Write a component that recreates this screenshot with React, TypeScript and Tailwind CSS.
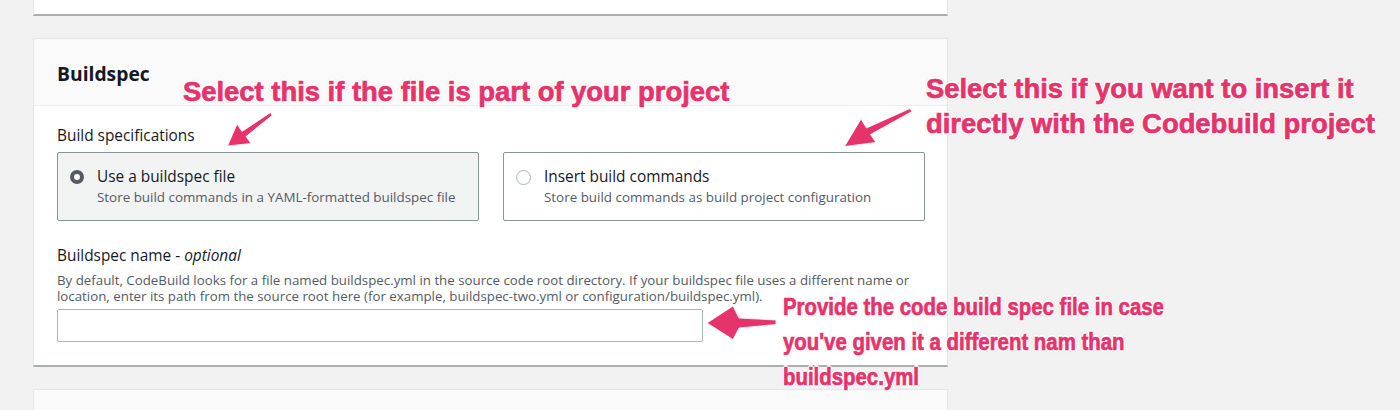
import React from "react";

const pinkText =
  "font-['Liberation_Sans',Arial,sans-serif] font-bold text-[#e6336b] [-webkit-text-stroke:0.7px_#e6336b] [text-shadow:1px_1px_0_#fff,-1px_-1px_0_#fff,1px_-1px_0_#fff,-1px_1px_0_#fff,2px_0_0_#fff,-2px_0_0_#fff,0_2px_0_#fff,0_-2px_0_#fff,0_0_3px_#8f8f8f]";

export default function App() {
  return (
    <div className="relative w-[1400px] h-[410px] overflow-hidden bg-[#f2f2f2] font-['Open_Sans',sans-serif] text-[#16191f]">
      <div className="ml-[33px] w-[915px] flex flex-col">
        {/* top card remnant */}
        <div className="h-[16px] bg-white border-x border-[#e4e7e8] border-b-2 border-b-[#a9aeb0]" />

        {/* Buildspec card */}
        <div className="mt-[22px] bg-white border-x border-t border-[#e4e7e8] border-b-2 border-b-[#a9aeb0] flex flex-col">
          <div className="h-[67px] bg-[#fafafa] border-b border-[#eaeded] pl-[23px] pt-[22px]">
            <h2 className="text-[19.3px] leading-[25px] font-bold">Buildspec</h2>
          </div>
          <div className="pl-[23px] pr-[22px] pt-[19px] pb-[23px] flex flex-col">
            <div className="text-[15.4px] leading-[22px]">Build specifications</div>
            <div className="mt-[5px] grid grid-cols-2 gap-[24px]">
              <div className="h-[69px] border border-[#879596] bg-[#f2f3f3] rounded-[2px] flex items-start pl-[12px] pt-[13px] gap-[13px]">
                <div className="mt-[4px] w-[14px] h-[14px] rounded-full border-[4px] border-[#545b64] bg-white shrink-0" />
                <div className="flex flex-col">
                  <span className="text-[15.4px] leading-[21px]">Use a buildspec file</span>
                  <span className="text-[13.4px] leading-[20px] text-[#545b64]">
                    Store build commands in a YAML-formatted buildspec file
                  </span>
                </div>
              </div>
              <div className="h-[69px] border border-[#879596] bg-white rounded-[2px] flex items-start pl-[12px] pt-[13px] gap-[13px]">
                <div className="mt-[4px] w-[15px] h-[15px] rounded-full border border-[#aab7b8] bg-white shrink-0" />
                <div className="flex flex-col">
                  <span className="text-[15.4px] leading-[21px]">Insert build commands</span>
                  <span className="text-[13.4px] leading-[20px] text-[#545b64]">
                    Store build commands as build project configuration
                  </span>
                </div>
              </div>
            </div>
            <div className="mt-[24px] text-[15.4px] leading-[22px]">
              Buildspec name - <i>optional</i>
            </div>
            <div className="mt-[5px] text-[13.3px] leading-[16px] text-[#545b64] w-[870px]">
              By default, CodeBuild looks for a file named buildspec.yml in the source code root directory. If your
              buildspec file uses a different name or location, enter its path from the source root here (for example,
              buildspec-two.yml or configuration/buildspec.yml).
            </div>
            <div className="mt-[5px] w-[646px] h-[33px] border border-[#aab7b8] rounded-[2px] bg-white" />
          </div>
        </div>

        {/* next card */}
        <div className="mt-[22px] h-[40px] bg-[#fafafa] border-x border-t border-[#e4e7e8]" />
      </div>

      {/* annotation arrows */}
      <svg className="absolute inset-0 pointer-events-none" width="1400" height="410" viewBox="0 0 1400 410">
        <g fill="#e6336b" stroke="#ffffff" strokeWidth="0.8" strokeLinejoin="round">
          <polygon points="270.5,112.5 242,131.5 237,124 227.5,146 251,143.5 246,136.5 272,115.5" />
          <polygon points="910,108.5 866.5,128 861,119 844.5,146.5 876,142.5 870.5,134.5 912,111.5" />
          <polygon points="776,320 739,318 733,306 707,323 733,339.5 739,328 776,324.5" />
        </g>
      </svg>

      {/* annotation texts */}
      <div className={`absolute left-[183px] top-[74px] text-[27.4px] leading-[35px] whitespace-nowrap ${pinkText}`}>
        Select this if the file is part of your project
      </div>
      <div className={`absolute left-[926px] top-[71px] text-[27.4px] leading-[35px] whitespace-nowrap ${pinkText}`}>
        Select this if you want to insert it
        <br />
        directly with the Codebuild project
      </div>
      <div
        className={`absolute left-[783px] top-[289px] text-[24px] leading-[35px] whitespace-nowrap origin-left scale-x-[0.85] ${pinkText}`}
      >
        Provide the code build spec file in case
        <br />
        you've given it a different nam than
        <br />
        buildspec.yml
      </div>
    </div>
  );
}
